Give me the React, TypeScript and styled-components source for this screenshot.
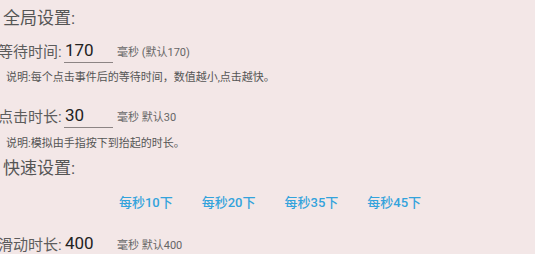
import {FC} from 'react';
import styled, {createGlobalStyle} from 'styled-components';

const GlobalStyle = createGlobalStyle`
  html, body {
    margin: 0;
    padding: 0;
    background-color: #f3e7e7;
  }
  body {
    font-family: Roboto, "Noto Sans CJK SC", sans-serif;
    overflow: hidden;
  }
`

const rates = ['每秒10下', '每秒20下', '每秒35下', '每秒45下']

const Field: FC<{ label: string, value: string, unit: string, top: number }> = ({label, value, unit, top}) => (
    <FieldRow $top={top}>
        <Label>{label}</Label>
        <Input>{value}</Input>
        <Unit>{unit}</Unit>
    </FieldRow>
)

export const App: FC = () => {
    return (
        <Page>
            <GlobalStyle/>
            <Title $top={6}>全局设置:</Title>
            <Field label="等待时间:" value="170" unit="毫秒 (默认170)" top={8}/>
            <Note $top={8}>说明:每个点击事件后的等待时间，数值越小,点击越快。</Note>
            <Field label="点击时长:" value="30" unit="毫秒 默认30" top={18}/>
            <Note $top={9}>说明:模拟由手指按下到抬起的时长。</Note>
            <Title $top={5}>快速设置:</Title>
            <RateRow>
                {rates.map((r) => <RateButton key={r}>{r}</RateButton>)}
            </RateRow>
            <Field label="滑动时长:" value="400" unit="毫秒 默认400" top={12}/>
        </Page>
    );
};

const Page = styled.div`
  width: 535px;
  display: flex;
  flex-direction: column;

  & > * {
    flex-shrink: 0;
  }
`

const Title = styled.div<{ $top: number }>`
  margin-top: ${p => p.$top}px;
  padding-left: 3px;
  height: 24px;
  line-height: 24px;
  font-size: 17px;
  color: #555;
`

const FieldRow = styled.div<{ $top: number }>`
  display: flex;
  align-items: center;
  height: 25px;
  margin-top: ${p => p.$top}px;
`

const Label = styled.div`
  width: 66px;
  margin-left: -2px;
  font-size: 15px;
  color: #5c5c5c;
  white-space: nowrap;
`

const Input = styled.div`
  box-sizing: border-box;
  width: 49px;
  height: 25px;
  line-height: 24px;
  padding-left: 1px;
  border-bottom: 1px solid #8c8484;
  font-size: 17px;
  color: #222;
`

const Unit = styled.div`
  margin-left: 4px;
  font-size: 11px;
  color: #666;
  white-space: nowrap;
`

const Note = styled.div<{ $top: number }>`
  margin-top: ${p => p.$top}px;
  padding-left: 6px;
  height: 14px;
  line-height: 14px;
  font-size: 11px;
  color: #555;
  white-space: nowrap;
`

const RateRow = styled.div`
  display: flex;
  justify-content: center;
  align-items: center;
  height: 36px;
  margin-top: 3px;
  padding-left: 5px;
  gap: 1px;
`

const RateButton = styled.div`
  padding: 0 14px;
  font-size: 13px;
  font-weight: 500;
  color: #33a3dc;
  cursor: pointer;
`

export default App;
